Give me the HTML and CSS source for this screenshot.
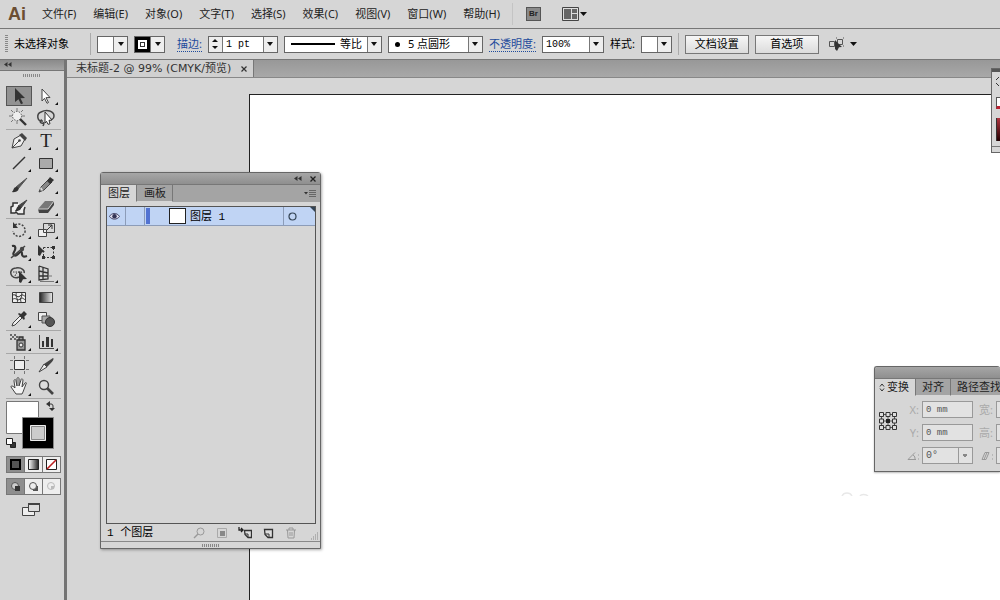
FILE: index.html
```html
<!DOCTYPE html>
<html lang="zh-CN">
<head>
<meta charset="utf-8">
<title>未标题-2</title>
<link rel="stylesheet" href="styles.css">
</head>
<body>
<div class="app">
  <header class="menubar">
    <span class="logo">Ai</span>
    <nav class="menus">
      <button>文件(F)</button>
      <button>编辑(E)</button>
      <button>对象(O)</button>
      <button>文字(T)</button>
      <button>选择(S)</button>
      <button>效果(C)</button>
      <button>视图(V)</button>
      <button>窗口(W)</button>
      <button>帮助(H)</button>
    </nav>
    <span class="rule"></span>
    <button class="bridge">Br</button>
    <button class="arrange" aria-label="排列文档">
      <svg width="26" height="14" viewBox="0 0 26 14"><path d="M.5.5h16v13H.5z" fill="#ddd" stroke="#444"/><path d="M2 2h7v10H2zM10 2h5v4h-5zM10 7h5v5h-5z" fill="#666"/><path d="M18 5h7l-3.500 4z" fill="#111"/></svg>
    </button>
  </header>

  <div class="controlbar">
    <span class="grip-v"></span>
    <span class="status">未选择对象</span>
    <span class="rule"></span>
    <button class="swatch-drop" aria-label="填色"><span class="chip"></span><span class="drop"></span></button>
    <button class="swatch-drop" aria-label="描边颜色"><span class="chip chip-stroke"></span><span class="drop"></span></button>
    <a class="link stroke-link" href="#stroke">描边:</a>
    <div class="spinbox">
      <span class="steps"><button class="step up" aria-label="增加"></button><button class="step down" aria-label="减少"></button></span>
      <input class="weight" value="1 pt" aria-label="描边粗细">
      <button class="drop" aria-label="粗细选项"></button>
    </div>
    <button class="combo profile" aria-label="宽度配置"><span class="face"><span class="stroke-line"></span>等比</span><span class="drop"></span></button>
    <button class="combo brush" aria-label="画笔定义"><span class="face"><span class="dot"></span>5 点圆形</span><span class="drop"></span></button>
    <a class="link" href="#opacity">不透明度:</a>
    <div class="spinbox opacity">
      <input value="100%" aria-label="不透明度">
      <button class="drop" aria-label="不透明度选项"></button>
    </div>
    <span class="caption">样式:</span>
    <button class="swatch-drop" aria-label="样式"><span class="chip"></span><span class="drop"></span></button>
    <span class="rule"></span>
    <button class="push">文档设置</button>
    <button class="push">首选项</button>
    <button class="select-like" aria-label="选择类似对象">
      <svg width="30" height="14" viewBox="0 0 30 14"><path d="M1.500 4.500h5v5h-5zM9.500 2.500h5v5h-5z" fill="none" stroke="#555"/><path d="M8 1h1M8 9h1M15 1h1M15 9h1" stroke="#555"/><path d="M7 3l7 7-3 .3L9 14l-2-2z" fill="#333"/><path d="M22 5h7l-3.500 4z" fill="#111"/></svg>
    </button>
  </div>

  <div class="workspace">
    <aside class="toolbox">
      <div class="toolbox-head"><svg width="8" height="5" viewBox="0 0 8 5"><path d="M3.500 0v5L0 2.500zM7.500 0v5L4 2.500z" fill="#333"/></svg></div>
      <div class="grip-h"></div>
      <div class="tools">
        <div class="group">
          <button class="tool active" aria-label="选择工具"><svg viewBox="0 0 20 20"><path d="M6 2l10 10-4.500.3 2.500 5-2 1-2.500-5L6 16z" fill="#333"/></svg></button>
          <button class="tool more" aria-label="直接选择"><svg viewBox="0 0 20 20"><path d="M6 3l8 8.500-4 .2 2.500 4.800-1.500.8-2.500-5L6 15z" fill="#fff" stroke="#444"/></svg></button>
          <button class="tool" aria-label="魔棒"><svg viewBox="0 0 20 20"><circle cx="8" cy="8" r="4.500" fill="#eee" stroke="#555" stroke-dasharray="1.500 1.300"/><path d="M8 0v3M2 2l2 2M0 8h3M2 14l2-2M8 16v-3M14 2l-2 2M13 8h3" stroke="#777"/><path d="M11 11l6 6" stroke="#333" stroke-width="2.400"/></svg></button>
          <button class="tool" aria-label="套索"><svg viewBox="0 0 20 20"><path d="M7 13C1 14 0 6 5 4c6-3 13-1 13 4 0 3-3 4-5 4M6 12c-3 0-2 4 1 3 2-1 0 3 0 3" fill="none" stroke="#444" stroke-width="1.500"/><path d="M9 4l7 8-3 .3 1 3.500-2 .5-1.500-3L9 15z" fill="#fff" stroke="#333"/></svg></button>
        </div>
        <div class="group">
          <button class="tool more" aria-label="钢笔"><svg viewBox="0 0 20 20"><path d="M3 17l2-9 7-4 4 4-4 7-9 2z" fill="#eee" stroke="#444"/><path d="M10 4l3-2 5 5-2 3z" fill="#444"/><path d="M3 17l7-7" stroke="#444"/><circle cx="10.500" cy="9.500" r="1.300" fill="#444"/></svg></button>
          <button class="tool more type" aria-label="文字工具">T</button>
          <button class="tool more" aria-label="直线段"><svg viewBox="0 0 20 20"><path d="M4 16L16 4" stroke="#333" stroke-width="1.400"/></svg></button>
          <button class="tool more" aria-label="矩形"><svg viewBox="0 0 20 20"><path d="M3.500 5.500h13v10h-13z" fill="#aaa" stroke="#333"/></svg></button>
          <button class="tool" aria-label="画笔"><svg viewBox="0 0 20 20"><path d="M18 3L9 14l-2-2z" fill="#555" stroke="#555"/><path d="M2 17c3 0 2-6 6-5 3 1 2 6-6 5z" fill="#333"/></svg></button>
          <button class="tool more" aria-label="铅笔"><svg viewBox="0 0 20 20"><path d="M3 17l2-5 8-8 3 3-8 8z" fill="#888" stroke="#444"/><path d="M11 6l3-4 4 3-4 4z" fill="#333"/><path d="M4 14l2 2 1-1-2-3z" fill="#ddd"/></svg></button>
          <button class="tool" aria-label="斑点画笔"><svg viewBox="0 0 20 20"><path d="M9 6H4v3l-2 1v6h4l1-1 2 2h6v-4l1-3" fill="#eee" stroke="#333" stroke-width="1.500"/><path d="M18 3l-6 8-3-2z" fill="#444" stroke="#444"/><path d="M5 14c3 0 2-6 6-5 3 2 0 6-6 5z" fill="#333"/></svg></button>
          <button class="tool more" aria-label="橡皮擦"><svg viewBox="0 0 20 20"><path d="M2 12L9 4h9l-6 8z" fill="#777"/><path d="M2 12h10v4H3zM12 12l6-8v4l-6 8z" fill="#444"/><path d="M2 12h10l6-8" fill="none" stroke="#ccc"/></svg></button>
        </div>
        <div class="group">
          <button class="tool more" aria-label="旋转"><svg viewBox="0 0 20 20"><path d="M6 5c5-3 11 1 10 7-2 6-11 6-12-1" fill="none" stroke="#444" stroke-width="1.500" stroke-dasharray="2 1.500"/><path d="M4 2v6h5z" fill="#333"/></svg></button>
          <button class="tool more" aria-label="比例缩放"><svg viewBox="0 0 20 20"><path d="M2.500 9.500h8v7h-8z" fill="#eee" stroke="#444"/><path d="M7.500 3.500h11v9h-11z" fill="none" stroke="#444"/><path d="M11 10l5-5M12 5h4v4" fill="none" stroke="#333"/></svg></button>
          <button class="tool more" aria-label="变形"><svg viewBox="0 0 20 20"><path d="M3 4c4-1 4 3 2 6s1 5 4 2 4-3 4 0 2 3 5 2" fill="none" stroke="#333" stroke-width="2.200"/><path d="M2 16L16 4" stroke="#444" stroke-width="1.500"/><circle cx="13" cy="7" r="2.200" fill="#444"/></svg></button>
          <button class="tool" aria-label="自由变换"><svg viewBox="0 0 20 20"><path d="M7.500 5.500h10v10h-10z" fill="none" stroke="#333" stroke-dasharray="2 1.500"/><path d="M2 3l7 7-3 .2L4 14l-2-1z" fill="#333"/><path d="M16 4h3v3h-3zM16 14h3v3h-3zM6 14h3v3H6z" fill="#333"/></svg></button>
          <button class="tool more" aria-label="形状生成器"><svg viewBox="0 0 20 20"><path d="M3 12C0 8 3 4 7 4c6-1 9 3 8 5M3 12c2 2 5 2 7 1" fill="none" stroke="#444" stroke-width="1.500"/><path d="M4 8h9M6 12c1-4 4-5 8-3" fill="none" stroke="#444" stroke-dasharray="1.500 1"/><path d="M10 7l8 8-4 .2-2 3.800-2-1z" fill="#333"/></svg></button>
          <button class="tool more" aria-label="透视网格"><svg viewBox="0 0 20 20"><path d="M3 2v14l9-1V5L3 2M3 7l9 2M3 12h9M7 3v13" fill="none" stroke="#333" stroke-width="1.300"/><path d="M12 12h4M4 17.500h14" stroke="#777" fill="none"/></svg></button>
        </div>
        <div class="group">
          <button class="tool" aria-label="网格"><svg viewBox="0 0 20 20"><path d="M3.500 5.500h13v10h-13z" fill="#eee" stroke="#333"/><path d="M3 9c3-4 5 3 8 0s4 1 6 0M3 13c4-4 5 2 8-1s4 2 6 0M8 5c-3 4 2 7 0 11M12 5c3 4-3 7 1 11" fill="none" stroke="#333"/></svg></button>
          <button class="tool" aria-label="渐变"><svg viewBox="0 0 20 20"><defs><linearGradient id="g1"><stop offset="0" stop-color="#222"/><stop offset="1" stop-color="#eee"/></linearGradient></defs><path d="M3.500 5.500h13v10h-13z" fill="url(#g1)" stroke="#444"/></svg></button>
          <button class="tool more" aria-label="吸管"><svg viewBox="0 0 20 20"><path d="M3 17l1-3 7-7 2 2-7 7z" fill="#eee" stroke="#444"/><path d="M9 5l6 6 1-2-1-1 3-3-3-3-3 3-2-1z" fill="#333"/></svg></button>
          <button class="tool" aria-label="混合"><svg viewBox="0 0 20 20"><path d="M2.500 3.500h8v8h-8z" fill="#eee" stroke="#444"/><path d="M6 7h8v7H6z" fill="#aaa" stroke="#555"/><circle cx="14" cy="13" r="4.500" fill="#555" stroke="#333"/></svg></button>
        </div>
        <div class="group">
          <button class="tool more" aria-label="符号喷枪"><svg viewBox="0 0 20 20"><path d="M8 8h8v10H8zM10 5h4v3h-4z" fill="#999" stroke="#333" stroke-width="1.300"/><circle cx="12" cy="13" r="2" fill="#eee" stroke="#333"/><path d="M1 3h2M5 3h2M3 5h2M7 5h2M1 7h2M5 7h2" stroke="#444" stroke-width="1.300"/></svg></button>
          <button class="tool more" aria-label="柱形图"><svg viewBox="0 0 20 20"><path d="M3.500 3v13.500H18" fill="none" stroke="#444"/><path d="M6 9h2v6H6zM10 5h3v10h-3zM15 7h2v8h-2z" fill="#333"/></svg></button>
        </div>
        <div class="group">
          <button class="tool" aria-label="画板"><svg viewBox="0 0 20 20"><path d="M5.500 5.500h10v9h-10z" fill="#eee" stroke="#333"/><path d="M5.500 1v3M15.500 1v3M5.500 16v3M15.500 16v3M1 5.500h3M1 14.500h3M17 5.500h3M17 14.500h3" stroke="#777"/></svg></button>
          <button class="tool more" aria-label="切片"><svg viewBox="0 0 20 20"><path d="M3 17l5-8 3 3z" fill="#eee" stroke="#444"/><path d="M8 9l9-6c2 1-2 5-6 9z" fill="#444"/></svg></button>
          <button class="tool more" aria-label="抓手"><svg viewBox="0 0 20 20"><path d="M7 17L2 10c0-2 2-1 4 1L5 4c0-2 2-2 2 0l1 5V2c0-2 2-2 2 0v7l2-6c0-2 2-1 2 0l-1 7 3-4c1-1 2 0 1 1l-3 8-1 2z" fill="#f4f4f4" stroke="#444"/></svg></button>
          <button class="tool" aria-label="缩放"><svg viewBox="0 0 20 20"><circle cx="8" cy="8" r="4.500" fill="#ddd" stroke="#444" stroke-width="1.400"/><path d="M11 11l6 6" stroke="#444" stroke-width="2.600"/></svg></button>
        </div>
        <div class="colors">
          <svg width="56" height="52" viewBox="0 0 56 52">
            <path d="M.5 2.500h32v32H.5z" fill="#fff" stroke="#777"/>
            <path d="M16.500 18.500h31v31h-31z" fill="#000" stroke="#888"/>
            <path d="M24.500 26.500h15v15h-15z" fill="#ccc" stroke="#eee"/><path d="M25.500 27.500h13v13h-13z" fill="none" stroke="#888"/>
            <path d="M42 5h3c2 0 2 1 2 4" fill="none" stroke="#333"/><path d="M40 5l4-3v6zM46 12l-3-3h6z" fill="#333"/>
            <path d="M4.500 43.500h5v5h-5z" fill="#333" stroke="#222"/><path d="M.5 39.500h6v6h-6z" fill="#fff" stroke="#222"/>
          </svg>
        </div>
        <div class="modes">
          <button class="on" aria-label="颜色"><svg viewBox="0 0 17 15"><path d="M4 3h9v9H4z" fill="#555" stroke="#000" stroke-width="2"/></svg></button>
          <button aria-label="渐变填色"><svg viewBox="0 0 17 15"><defs><linearGradient id="g2"><stop offset="0" stop-color="#fff"/><stop offset="1" stop-color="#222"/></linearGradient></defs><path d="M3.500 2.500h10v10h-10z" fill="url(#g2)" stroke="#222"/></svg></button>
          <button aria-label="无"><svg viewBox="0 0 17 15"><path d="M3.500 2.500h10v10h-10z" fill="#fff" stroke="#222"/><path d="M4 12l9-9" stroke="#b22" stroke-width="1.600"/></svg></button>
        </div>
        <div class="modes">
          <button class="on" aria-label="正常绘图"><svg viewBox="0 0 17 15"><circle cx="8" cy="7" r="3.500" fill="#ccc" stroke="#555"/><path d="M8 7h5v5H8z" fill="#333"/></svg></button>
          <button aria-label="背面绘图"><svg viewBox="0 0 17 15"><path d="M8 7h5v5H8z" fill="#555"/><circle cx="8" cy="7" r="3.500" fill="#eee" stroke="#555"/></svg></button>
          <button aria-label="内部绘图" disabled><svg viewBox="0 0 17 15"><circle cx="8" cy="7" r="3.500" fill="#eee" stroke="#bbb"/><path d="M8 7h3v3H8z" fill="#bbb"/></svg></button>
        </div>
        <button class="screen" aria-label="更改屏幕模式"><svg width="20" height="15" viewBox="0 0 20 15"><path d="M1.500 5.500h12v8h-12z" fill="#eee" stroke="#444"/><path d="M7.500 1.500h11v8h-11z" fill="#ddd" stroke="#444"/><path d="M7 2h12" stroke="#444" stroke-width="2"/></svg></button>
      </div>
    </aside>

    <main class="document">
      <div class="tabs">
        <div class="tab">未标题-2 @ 99% (CMYK/预览)<button class="close" aria-label="关闭"><svg width="6" height="6" viewBox="0 0 6 6"><path d="M.5.5l5 5M5.500.5l-5 5" stroke="#333" stroke-width="1.200"/></svg></button></div>
      </div>
      <div class="canvas"><div class="artboard"></div></div>
    </main>
  </div>

  <section class="panel layers">
    <div class="panel-title">
      <svg width="8" height="5" viewBox="0 0 8 5"><path d="M3.500 0v5L0 2.500zM7.500 0v5L4 2.500z" fill="#333"/></svg>
      <svg width="6" height="6" viewBox="0 0 6 6"><path d="M.5.5l5 5M5.500.5l-5 5" stroke="#222" stroke-width="1.300"/></svg>
    </div>
    <div class="panel-tabs">
      <button class="ptab current">图层</button><button class="ptab">画板</button>
      <button class="flyout" aria-label="面板菜单"><svg width="12" height="7" viewBox="0 0 12 7"><path d="M0 2h4L2 4.500z" fill="#333"/><path d="M5 .5h7M5 2.500h7M5 4.500h7M5 6.500h7" stroke="#666"/></svg></button>
    </div>
    <div class="layer-list">
      <div class="layer">
        <span class="eye"><svg width="11" height="8" viewBox="0 0 11 8"><path d="M.5 4.500C2 1 8 0 10.500 4.500 8 8 3 8 .5 4.500z" fill="#dde" stroke="#446"/><circle cx="5.500" cy="4.200" r="2.200" fill="#335"/></svg></span>
        <span class="lock"></span>
        <span class="bar"></span>
        <span class="thumb"></span>
        <span class="layer-name">图层 1</span>
        <span class="target"><svg width="9" height="9" viewBox="0 0 9 9"><circle cx="4.500" cy="4.500" r="3.500" fill="none" stroke="#345" stroke-width="1.200"/></svg></span>
        <span class="corner"></span>
      </div>
    </div>
    <div class="layers-foot">
      <span class="count">1 个图层</span>
      <button aria-label="定位对象"><svg viewBox="0 0 14 12"><circle cx="8.500" cy="4.500" r="3.500" fill="none" stroke="#999"/><path d="M6 7l-4 4" stroke="#999" stroke-width="1.500"/></svg></button>
      <button aria-label="剪切蒙版"><svg viewBox="0 0 14 12"><path d="M2.500 1.500h9v9h-9z" fill="none" stroke="#aaa"/><path d="M5 4h5v5H5z" fill="#888"/></svg></button>
      <button aria-label="新建子图层"><svg viewBox="0 0 14 12"><path d="M6.500 3.500h7v7H10l-3-3z" fill="#ddd" stroke="#333" stroke-width="1.300"/><path d="M7 7h3v3" fill="none" stroke="#333"/><path d="M1 0v3h4M3 1l2 2-2 2" fill="none" stroke="#222" stroke-width="1.300"/></svg></button>
      <button aria-label="新建图层"><svg viewBox="0 0 14 12"><path d="M3.500 2.500h8v8H7l-3-3z" fill="#ddd" stroke="#333" stroke-width="1.300"/><path d="M4 7h4v4" fill="none" stroke="#333"/></svg></button>
      <button aria-label="删除"><svg viewBox="0 0 14 12"><path d="M2 3h10M5 3V1h4v2M3.500 3l.5 8h6l.5-8M6 5v4M8 5v4" fill="none" stroke="#999"/></svg></button>
      <svg class="sizer" width="9" height="9" viewBox="0 0 9 9"><path d="M7 1h2M5 3h4M3 5h6M1 7h8" stroke="#888" stroke-dasharray="1 1"/></svg>
    </div>
    <div class="panel-grip"><span class="grip-h"></span></div>
  </section>

  <section class="panel color-dock">
    <div class="dock-title"></div>
    <div class="dock-body">
      <svg width="5" height="9" viewBox="0 0 5 9"><path d="M1 3l3-3M1 6l3 3" stroke="#333" fill="none"/></svg>
      <span class="red-chip"></span>
      <span class="ramp"></span>
    </div>
  </section>

  <section class="panel transform">
    <div class="panel-title"></div>
    <div class="panel-tabs">
      <button class="ptab current"><svg width="6" height="9" viewBox="0 0 6 9"><path d="M1 3.500l2-2.500 2 2.500M1 5.500l2 2.500 2-2.500" fill="none" stroke="#333"/></svg>变换</button><button class="ptab">对齐</button><button class="ptab">路径查找</button>
    </div>
    <div class="transform-body">
      <svg class="refpoint" width="18" height="18" viewBox="0 0 18 18"><path d="M3 2.500h12M3 9h12M3 15.500h12M2.500 3v12M9 3v12M15.500 3v12" stroke="#555"/><path d="M.5.5h4v4h-4zM7 .5h4v4H7zM13.500.5h4v4h-4zM.5 7h4v4h-4zM13.500 7h4v4h-4zM.5 13.500h4v4h-4zM7 13.500h4v4H7zM13.500 13.500h4v4h-4z" fill="#ddd" stroke="#333"/><path d="M7 7h4v4H7z" fill="#222"/></svg>
      <div class="fields">
        <label for="tx">X:</label><input id="tx" value="0 mm" disabled><label for="tw">宽:</label><input id="tw" disabled>
        <label for="ty">Y:</label><input id="ty" value="0 mm" disabled><label for="th">高:</label><input id="th" disabled>
        <label for="ta" aria-label="旋转"><svg width="12" height="8" viewBox="0 0 12 8"><path d="M8 .5L1 7.500h8M6 3c2 1 2 3 2 4" fill="none" stroke="#999"/><path d="M11 3h1M11 7h1" stroke="#999"/></svg></label>
        <select id="ta" disabled><option>0°</option></select>
        <label for="ts" aria-label="倾斜"><svg width="12" height="8" viewBox="0 0 12 8"><path d="M4 .5h4l-3 7H1zM6 .5l-3 7" fill="none" stroke="#999"/><path d="M11 3h1M11 7h1" stroke="#999"/></svg></label><input id="ts" disabled>
      </div>
    </div>
  </section>

  <svg class="mark" width="30" height="4" viewBox="0 0 30 4"><path d="M2 4c2-4 8-4 10 0M20 4c1-2 6-2 8 0" fill="none" stroke="#e8e8e8" stroke-width="1.500"/></svg>
</div>
</body>
</html>
```
FILE: styles.css
```css
* { box-sizing: border-box; }
body {
  margin: 0;
  font: 11px/16px "Noto Sans", "Noto Sans CJK SC", sans-serif;
  color: #222;
}
button, input, select {
  font: inherit;
  color: inherit;
  margin: 0;
  padding: 0;
  border: 0;
  border-radius: 0;
  background: none;
}
svg { display: block; flex: none; }
.app {
  position: relative;
  display: flex;
  flex-direction: column;
  height: 100vh;
  overflow: hidden;
  background: #d6d6d6;
}

/* Menu bar */
.menubar {
  display: flex;
  align-items: center;
  height: 29px;
  padding-left: 8px;
  border-bottom: 1px solid #777;
}
.logo {
  width: 34px;
  font: bold 18px/24px "Liberation Sans", sans-serif;
  color: #6b4e33;
}
.menus { display: flex; gap: 17px; }
.menubar .rule { margin: 0 13px 0 12px; border-color: #c4c4c4; }
.rule { height: 22px; border-left: 1px solid #aaa; }
.bridge {
  width: 15px;
  height: 14px;
  border: 1px solid #555;
  background: #8a8a8a;
  font: bold 8px/12px "Liberation Sans", sans-serif;
}
.arrange { margin-left: 21px; }

/* Control bar */
.controlbar {
  display: flex;
  align-items: center;
  gap: 6px;
  height: 31px;
  padding-left: 5px;
  border-bottom: 1px solid #777;
  color: #000;
  white-space: nowrap;
}
.controlbar > * { flex: none; }
.grip-v {
  width: 3px;
  height: 18px;
  background: repeating-linear-gradient(#888 0 1px, transparent 1px 2px);
}
.status { width: 70px; }
.drop {
  display: flex;
  flex: none;
  align-items: center;
  justify-content: center;
  width: 14px;
  height: 15px;
  border-left: 1px solid #777;
  background: #eee;
}
.drop::after {
  content: "";
  border: 3px solid transparent;
  border-top: 4px solid #111;
  border-bottom: 0;
}
.swatch-drop, .combo, .spinbox {
  display: flex;
  height: 17px;
  border: 1px solid #666;
  background: #fff;
}
.swatch-drop { width: 31px; }
.chip { flex: 1; height: 15px; background: #fff; }
.chip-stroke {
  border: 3px solid #000;
  background: #fff;
  box-shadow: inset 0 0 0 2px #fff, inset 0 0 0 3px #333;
}
.link {
  color: #1d4a9c;
  line-height: 14px;
  text-decoration: none;
  border-bottom: 1px dotted #1d4a9c;
}
.stroke-link { margin-left: 6px; }
.spinbox { width: 70px; font: 10px/15px "Liberation Mono", monospace; }
.spinbox input { flex: 1; min-width: 0; padding-left: 3px; }
.opacity { width: 62px; }
.steps { display: flex; flex-direction: column; width: 14px; border-right: 1px solid #777; background: #eee; }
.step { display: flex; flex: 1; align-items: center; justify-content: center; }
.step::after { content: ""; border: 3px solid transparent; }
.up::after { border-top: 0; border-bottom-color: #111; }
.down::after { border-bottom: 0; border-top-color: #111; }
.face { display: flex; flex: 1; align-items: center; height: 15px; }
.profile { width: 98px; }
.profile .face { justify-content: space-between; padding: 0 5px 0 6px; }
.stroke-line { width: 44px; border-top: 2px solid #000; }
.brush { width: 95px; }
.brush .face { gap: 8px; padding-left: 6px; }
.dot { width: 5px; height: 5px; border-radius: 50%; background: #000; }
.push {
  width: 64px;
  height: 19px;
  border: 1px solid #777;
  background: linear-gradient(#f6f6f6, #dcdcdc);
}
.select-like { margin-left: 3px; }

/* Workspace */
.workspace { display: flex; flex: 1; min-height: 0; }
.toolbox {
  width: 67px;
  flex: none;
  border-right: 3px solid #747474;
}
.toolbox-head {
  height: 11px;
  padding: 2px 0 0 4px;
  background: linear-gradient(#8a8a8a, #a4a4a4);
  border-bottom: 1px solid #777;
}
.grip-h {
  display: block;
  width: 18px;
  height: 3px;
  background: repeating-linear-gradient(90deg, #888 0 1px, transparent 1px 2px);
}
.toolbox > .grip-h { margin: 3px 0 8px 23px; }
.tools { width: 55px; margin-left: 6px; }
.group {
  display: grid;
  grid-template-columns: 27px 27px;
  grid-auto-rows: 22px;
  align-items: center;
  border-bottom: 1px solid #a8a8a8;
}
.tool {
  position: relative;
  display: flex;
  align-items: center;
  justify-content: center;
  width: 26px;
  height: 20px;
}
.tool svg { width: 20px; height: 20px; }
.active { border: 1px solid #555; background: #929292; }
.more::after {
  content: "";
  position: absolute;
  right: 1px;
  bottom: 1px;
  border: solid transparent;
  border-width: 0 0 3px 3px;
  border-bottom-color: #111;
}
.type { font: 19px/20px "Liberation Serif", serif; color: #222; }
.modes {
  display: grid;
  grid-template-columns: repeat(3, 1fr);
  height: 17px;
  margin: 5px 0;
  border: 1px solid #777;
  background: #eee;
}
.modes button + button { border-left: 1px solid #777; }
.modes svg { width: 17px; height: 15px; }
.on { background: #8e8e8e; }
.screen { margin: 2px 0 0 15px; }

.document { display: flex; flex: 1; flex-direction: column; min-width: 0; }
.tabs {
  display: flex;
  height: 18px;
  background: linear-gradient(#989898, #a8a8a8);
  border-bottom: 1px solid #888;
}
.tab {
  display: flex;
  align-items: center;
  gap: 10px;
  padding: 0 6px 0 9px;
  background: #d0d0d0;
  border-right: 1px solid #777;
  font-family: "DejaVu Sans", "Noto Sans CJK SC", sans-serif;
  color: #333;
}
.canvas { flex: 1; padding: 16px 0 0 182px; }
.artboard { height: 100%; background: #fff; border: solid #222; border-width: 1px 0 0 1px; }

/* Floating panels */
.panel {
  position: absolute;
  background: #d6d6d6;
  border: 1px solid #666;
  border-radius: 3px 3px 0 0;
}
.panel-title {
  display: flex;
  align-items: center;
  justify-content: flex-end;
  gap: 8px;
  height: 12px;
  padding-right: 4px;
  background: linear-gradient(#a6a6a6, #8f8f8f);
  border-bottom: 1px solid #777;
}
.panel-tabs {
  display: flex;
  height: 17px;
  background: #a4a4a4;
  white-space: nowrap;
}
.ptab {
  display: flex;
  flex: none;
  align-items: center;
  gap: 2px;
  padding: 0 6px;
  border-right: 1px solid #777;
  border-bottom: 1px solid #d6d6d6;
}
.current { background: #d6d6d6; }
.flyout { margin: 0 4px 0 auto; }

.layers {
  left: 100px;
  top: 172px;
  display: flex;
  flex-direction: column;
  width: 221px;
  height: 377px;
  box-shadow: 1px 1px 3px #0005;
}
.layers .ptab { padding: 0 6px 0 7px; }
.layer-list { flex: 1; margin: 4px 4px 0 5px; border: 1px solid #555; }
.layer {
  position: relative;
  display: flex;
  align-items: stretch;
  height: 19px;
  background: #c0d4f4;
  border-bottom: 1px solid #8c9cb8;
}
.eye { display: flex; align-items: center; justify-content: center; width: 19px; padding-right: 3px; border-right: 1px solid #8c9cb8; }
.lock { width: 19px; border-right: 1px solid #8c9cb8; }
.bar { width: 4px; margin: 1px 19px 1px 1px; background: #5273d2; }
.thumb { width: 17px; height: 16px; margin-top: 1px; border: 1px solid #222; background: #fff; }
.layer-name, .count { font: 11px/20px "Liberation Mono", "Noto Sans CJK SC", monospace; color: #000; }
.layer-name { flex: 1; padding-left: 4px; }
.target { display: flex; align-items: center; width: 32px; padding-left: 4px; border-left: 1px solid #8c9cb8; }
.corner {
  position: absolute;
  top: 0;
  right: 0;
  border: solid transparent;
  border-width: 5px 0 0 5px;
  border-top-color: #345;
}
.layers-foot { display: flex; align-items: center; gap: 9px; height: 17px; padding: 0 1px 0 6px; }
.count { flex: 1; }
.layers-foot button svg { width: 14px; height: 12px; }
.sizer { align-self: flex-end; margin-left: 3px; }
.panel-grip { display: flex; align-items: center; justify-content: center; height: 7px; border-top: 1px solid #888; }

.color-dock { right: 0; top: 68px; width: 9px; border-right: 0; border-radius: 0; }
.dock-title { height: 3px; background: #555; }
.dock-body { display: flex; flex-direction: column; align-items: flex-end; height: 75px; padding-top: 5px; border-bottom: 1px solid #777; margin-bottom: 5px; }
.red-chip { width: 4px; height: 12px; margin-top: 11px; border: 1px solid #555; border-right: 0; border-bottom: 3px solid #b23; background: #fff; }
.ramp { width: 4px; height: 23px; margin-top: 9px; border-left: 1px solid #333; background: linear-gradient(#b23540, #200); }

.transform { right: 0; top: 366px; width: 126px; overflow: hidden; border-right: 0; box-shadow: 0 1px 2px #0004; }
.transform .ptab { padding: 0 6px; }
.transform .current { padding: 0 6px 0 4px; }
.transform-body { display: flex; height: 75px; padding: 5px 0 0 4px; }
.refpoint { margin-top: 11px; }
.fields {
  display: grid;
  flex: none;
  grid-template-columns: 23px 51px 19px 51px;
  grid-auto-rows: 17px;
  row-gap: 6px;
  column-gap: 2px;
  align-items: center;
  color: #aaa;
}
.fields label { display: flex; justify-content: flex-end; padding-right: 1px; }
.fields input, .fields select {
  width: 100%;
  height: 17px;
  padding-left: 3px;
  border: 1px solid #999;
  background: #e2e2e2;
  font: 9px/15px "Liberation Mono", monospace;
  color: #555;
  opacity: 1;
}
.fields select {
  appearance: none;
  font-size: 10px;
  background:
    conic-gradient(from -35deg at 50% 100%, #888 0 70deg, transparent 0) right 4px top 6px / 6px 4px no-repeat,
    linear-gradient(#999, #999) right 13px top 0 / 1px 15px no-repeat,
    #e2e2e2;
}
.mark { position: absolute; left: 840px; top: 492px; }
```
